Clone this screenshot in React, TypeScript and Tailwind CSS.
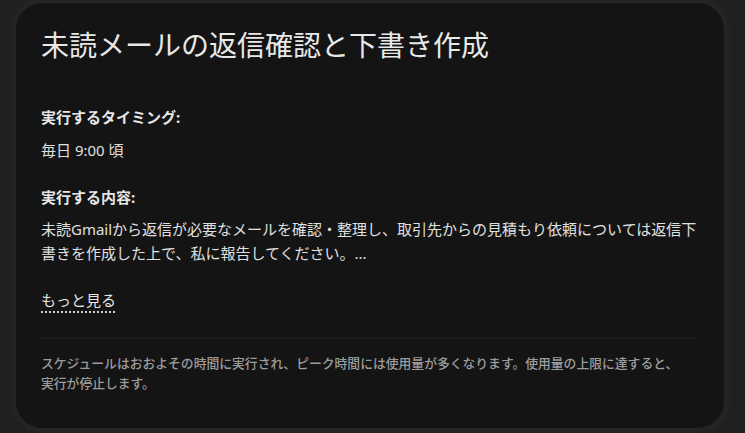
import React from "react";

export default function App() {
  return (
    <div
      className="w-[745px] h-[433px] bg-[#202020] overflow-hidden"
      style={{ fontFamily: '"Noto Sans", "Noto Sans CJK JP", sans-serif' }}
    >
      <div className="ml-4 mt-[3px] w-[708px] h-[425px] rounded-[26px] bg-[#141414] shadow-[0_0_10px_4px_rgba(255,255,255,0.035)] pt-[22px] px-[25px] flex flex-col">
        <h1 className="text-[28px] leading-[40px] font-normal text-[#e8e8e8] tracking-normal">
          未読メールの返信確認と下書き作成
        </h1>
        <div className="mt-[40px] text-[15px] leading-[24px] font-bold text-[#e6e6e6]">
          実行するタイミング:
        </div>
        <div className="mt-[9px] text-[15px] leading-[24px] text-[#e0e0e0]">毎日 9:00 頃</div>
        <div className="mt-[23px] text-[15px] leading-[24px] font-bold text-[#e6e6e6]">
          実行する内容:
        </div>
        <p className="mt-[8px] text-[15px] leading-[24px] text-[#e0e0e0]">
          未読Gmailから返信が必要なメールを確認・整理し、取引先からの見積もり依頼については返信下書きを作成した上で、私に報告してください。...
        </p>
        <div className="mt-[23px] h-[24px] flex items-start">
          <span className="text-[15px] leading-[24px] text-[#e6e6e6] underline decoration-dotted decoration-[#d0d0d0] underline-offset-[5px] decoration-[2px]">
            もっと見る
          </span>
        </div>
        <div className="mt-[26px] h-px bg-[#1f1f1f]" />
        <p className="mt-[14px] text-[12.8px] leading-[20px] font-medium text-[#9c9c9c]">
          スケジュールはおおよその時間に実行され、ピーク時間には使用量が多くなります。使用量の上限に達すると、
          <br />
          実行が停止します。
        </p>
      </div>
    </div>
  );
}
